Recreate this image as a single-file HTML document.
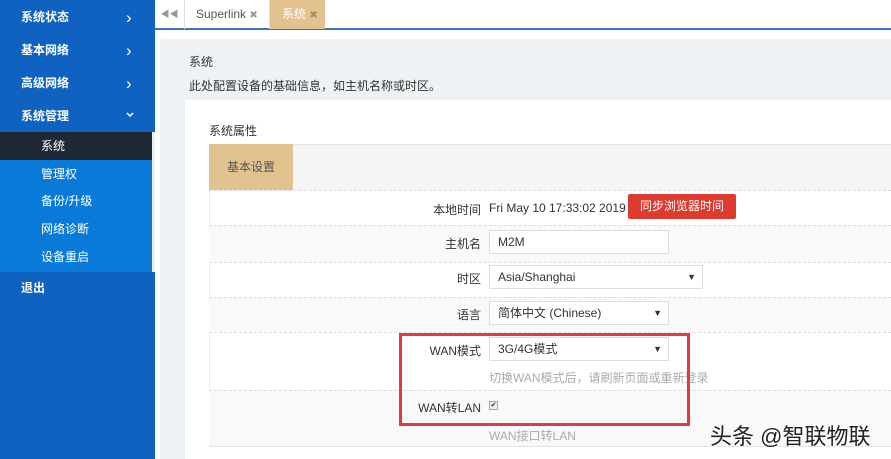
<!DOCTYPE html>
<html><head><meta charset="utf-8"><style>
*{margin:0;padding:0;box-sizing:border-box}
body{width:891px;height:459px;overflow:hidden;background:#fff;font-family:"Liberation Sans","Noto Sans CJK SC",sans-serif;font-size:12px;color:#333;position:relative}
.a{position:absolute}
#sb{left:0;top:0;width:155px;height:459px;background:#0f62bf}
.m{position:absolute;left:21px;color:#fff;font-weight:bold;font-size:12px}
.ch{position:absolute;left:126px;color:#fff;font-size:17px;line-height:17px}
.s{position:absolute;left:0;width:152px;height:28px;line-height:28px;padding-left:41px;color:#fff;font-size:12px}
.row{position:absolute;left:209px;width:682px;border-top:1px dashed #ddd}
.lbl{position:absolute;right:410px;font-size:12px;color:#333;text-align:right;white-space:nowrap}
.inp{position:absolute;left:489px;height:24px;border:1px solid #ddd;background:#fff;padding-left:8px;line-height:22px;font-size:12px;color:#333}
.arr{position:absolute;right:6px;top:0;font-size:9px}
</style></head><body>
<div id="sb" class="a">
<div class="m" style="top:8px">系统状态</div><div class="ch" style="top:9px">›</div>
<div class="m" style="top:41px">基本网络</div><div class="ch" style="top:42px">›</div>
<div class="m" style="top:74px">高级网络</div><div class="ch" style="top:75px">›</div>
<div class="m" style="top:107px">系统管理</div>
<svg class="a" style="left:126px;top:112px" width="8" height="6"><path d="M1 1L4 4L7 1" stroke="#fff" stroke-width="1.5" fill="none"/></svg>
<div class="a" style="left:0;top:160px;width:152px;height:112px;background:#0a7ad9"></div>
<div class="s" style="top:132px;background:#1f2935">系统</div>
<div class="s" style="top:160px">管理权</div>
<div class="s" style="top:187px">备份/升级</div>
<div class="s" style="top:215px">网络诊断</div>
<div class="s" style="top:243px">设备重启</div>
<div class="m" style="top:279px">退出</div>
</div>
<div class="a" style="left:152px;top:132px;width:3px;height:140px;background:#e8eef5"></div>
<div class="a" style="left:155px;top:0;width:736px;height:30px;background:#fff;border-bottom:2px solid #3a73b8"></div>
<div class="a" style="left:155px;top:0;width:30px;height:29px;border-right:1px solid #ddd;color:#999;text-align:center;line-height:29px;font-size:9px">◀◀</div>
<div class="a" style="left:185px;top:0;width:85px;height:29px;border-right:1px solid #ddd;color:#555;line-height:29px;padding-left:11px;font-size:12px">Superlink <span style="color:#999;font-size:10px">✖</span></div>
<div class="a" style="left:270px;top:0;width:55px;height:29px;background:#e2c38f;color:#fff;line-height:29px;padding-left:12px;font-size:12px">系统 <span style="color:#b08a55;font-size:10px">✖</span></div>
<div class="a" style="left:160px;top:39px;width:731px;height:420px;background:#eff2f4"></div>
<div class="a" style="left:189px;top:53px;font-size:12px">系统</div>
<div class="a" style="left:189px;top:77px;font-size:12px">此处配置设备的基础信息，如主机名称或时区。</div>
<div class="a" style="left:185px;top:100px;width:706px;height:359px;background:#fff"></div>
<div class="a" style="left:209px;top:122px;font-size:12px">系统属性</div>
<div class="a" style="left:209px;top:144px;width:682px;height:46px;background:#f4f5f6;border-top:1px solid #e4e4e4"></div>
<div class="a" style="left:209px;top:144px;width:84px;height:46px;background:#e2c38f;line-height:46px;text-align:center;color:#555;font-size:12px">基本设置</div>
<div class="row" style="top:190px;height:35px;background:#fff;border-left:1px solid #eee"></div>
<div class="row" style="top:225px;height:37px;background:#f9f9f9"></div>
<div class="row" style="top:262px;height:35px;background:#fff;border-left:1px solid #eee"></div>
<div class="row" style="top:297px;height:35px;background:#f9f9f9"></div>
<div class="row" style="top:332px;height:58px;background:#fff;border-left:1px solid #eee"></div>
<div class="row" style="top:390px;height:57px;background:#f9f9f9;border-bottom:1px solid #e4e4e4"></div>
<div class="lbl" style="top:201px">本地时间</div>
<div class="a" style="left:489px;top:201px;font-size:12px">Fri May 10 17:33:02 2019</div>
<div class="a" style="left:628px;top:194px;width:108px;height:25px;background:#dd3b30;border-radius:2px;color:#fff;text-align:center;line-height:25px;font-size:12px">同步浏览器时间</div>
<div class="lbl" style="top:235px">主机名</div>
<div class="inp" style="top:230px;width:180px">M2M</div>
<div class="lbl" style="top:270px">时区</div>
<div class="inp" style="top:265px;width:214px">Asia/Shanghai<span class="arr">▼</span></div>
<div class="lbl" style="top:306px">语言</div>
<div class="inp" style="top:301px;width:180px">简体中文 (Chinese)<span class="arr">▼</span></div>
<div class="lbl" style="top:342px">WAN模式</div>
<div class="inp" style="top:337px;width:180px">3G/4G模式<span class="arr">▼</span></div>
<div class="a" style="left:489px;top:369px;color:#aaa;font-size:12px">切换WAN模式后，请刷新页面或重新登录</div>
<div class="lbl" style="top:399px">WAN转LAN</div>
<div class="a" style="left:489px;top:401px;width:9px;height:9px;border:1px solid #aaa;background:#eee;font-size:7px;line-height:7px;text-align:center">✔</div>
<div class="a" style="left:489px;top:427px;color:#aaa;font-size:12px">WAN接口转LAN</div>
<div class="a" style="left:399px;top:333px;width:291px;height:93px;border:3px solid #e03a45"></div>
<div class="a" style="left:710px;top:419px;font-size:22px;color:#222;text-shadow:0 0 2px #fff,0 0 2px #fff;white-space:nowrap">头条 @智联物联</div>
</body></html>
